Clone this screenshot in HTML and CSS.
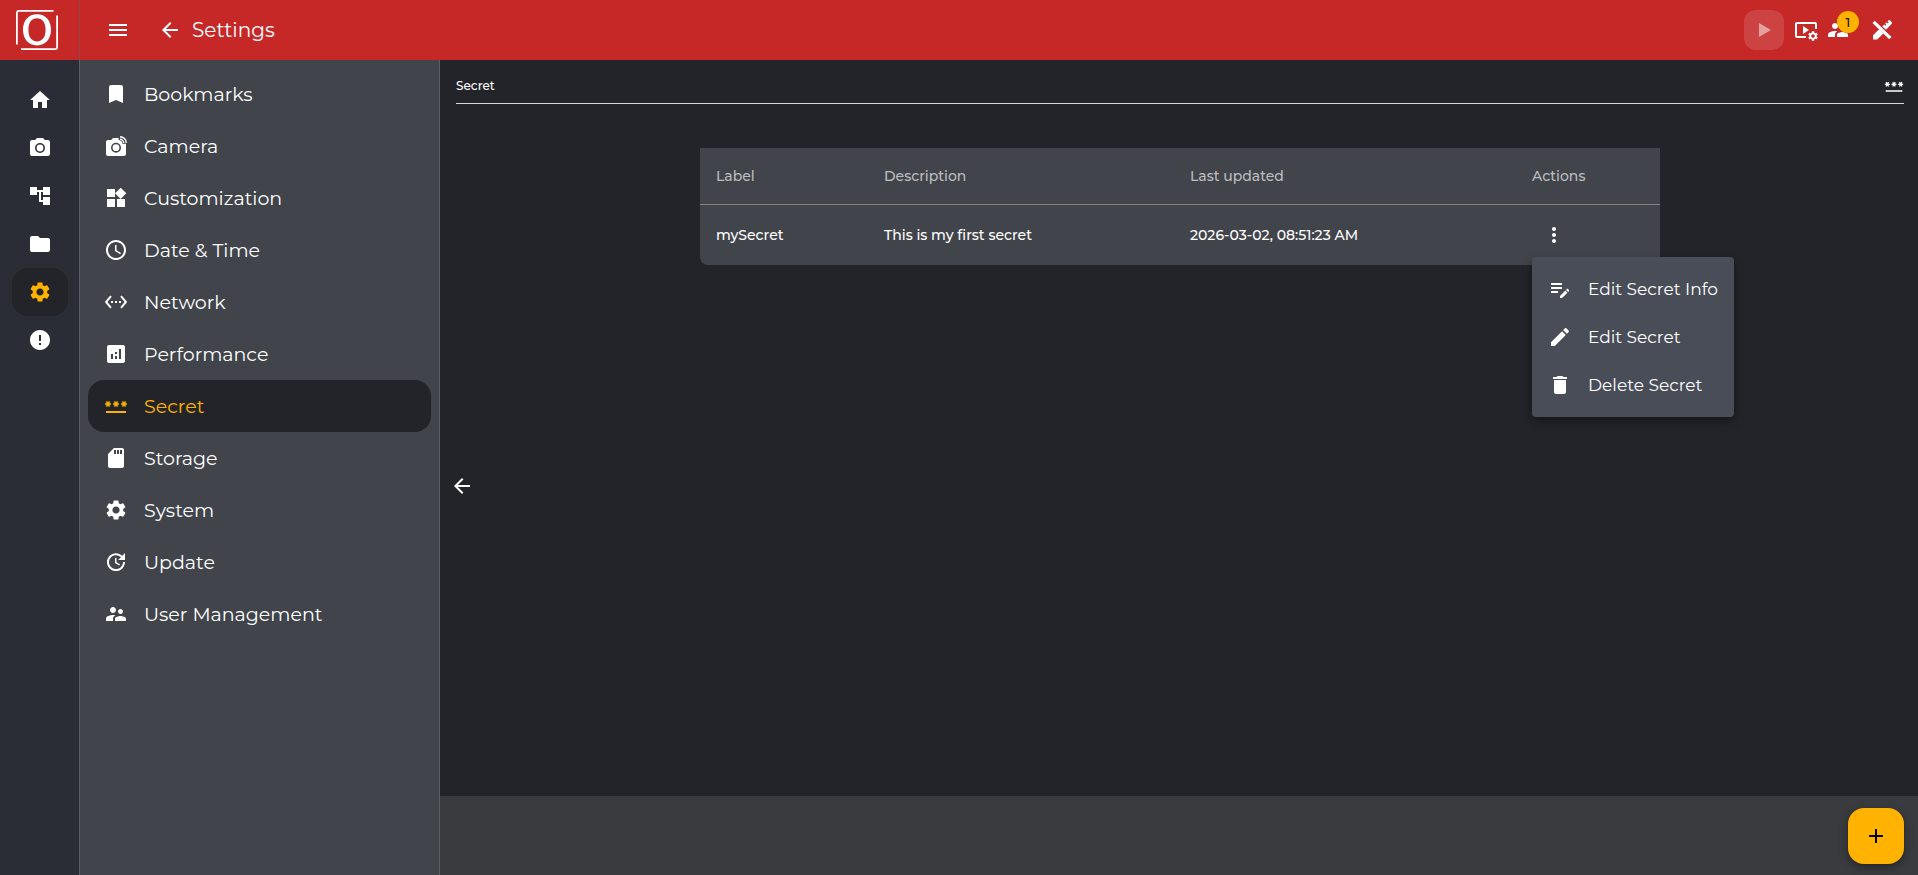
FILE: index.html
```html
<!DOCTYPE html>
<html lang="en">
<head>
<meta charset="utf-8">
<meta name="viewport" content="width=device-width, initial-scale=1">
<title>Settings - Secret</title>
<link rel="stylesheet" href="styles.css">
</head>
<body>
<svg class="sprite" aria-hidden="true">
  <symbol id="i-gear" viewBox="0 0 24 24"><path d="M19.14 12.94c.04-.3.06-.61.06-.94 0-.32-.02-.64-.07-.94l2.03-1.58c.18-.14.23-.41.12-.61l-1.92-3.32c-.12-.22-.37-.29-.59-.22l-2.39.96c-.5-.38-1.03-.7-1.62-.94l-.36-2.54c-.04-.24-.24-.41-.48-.41h-3.84c-.24 0-.43.17-.47.41l-.36 2.54c-.59.24-1.13.57-1.62.94l-2.39-.96c-.22-.08-.47 0-.59.22L2.74 8.87c-.12.21-.08.47.12.61l2.03 1.58c-.05.3-.09.63-.09.94s.02.64.07.94l-2.03 1.58c-.18.14-.23.41-.12.61l1.92 3.32c.12.22.37.29.59.22l2.39-.96c.5.38 1.03.7 1.62.94l.36 2.54c.05.24.24.41.48.41h3.84c.24 0 .44-.17.47-.41l.36-2.54c.59-.24 1.13-.56 1.62-.94l2.39.96c.22.08.47 0 .59-.22l1.92-3.32c.12-.22.07-.47-.12-.61l-2.01-1.58zM12 15.6c-1.98 0-3.6-1.62-3.6-3.6s1.62-3.6 3.6-3.6 3.6 1.62 3.6 3.6-1.62 3.6-3.6 3.6z"/></symbol>
  <symbol id="i-back" viewBox="0 0 24 24"><path d="M20 11H7.830l5.590-5.590L12 4l-8 8 8 8 1.410-1.410L7.830 13H20v-2z"/></symbol>
  <symbol id="i-password" viewBox="0 0 24 24"><path d="M2 17h20v2H2v-2zm1.15-4.05L4 11.47l.85 1.48 1.3-.75-.85-1.48H7v-1.5H5.3l.85-1.47L4.85 7 4 8.47 3.15 7l-1.3.75.85 1.47H1v1.5h1.7l-.85 1.48 1.3.75zm6.7-.75 1.3.75.85-1.48.85 1.48 1.3-.75-.85-1.48H15v-1.5h-1.7l.85-1.47-1.3-.75L12 8.47 11.15 7l-1.3.75.85 1.47H9v1.5h1.7l-.85 1.48zM23 9.22h-1.7l.85-1.47-1.3-.75L20 8.47 19.15 7l-1.3.75.85 1.47H17v1.5h1.7l-.85 1.48 1.3.75.85-1.48.85 1.48 1.3-.75-.85-1.48H23v-1.5z"/></symbol>
  <symbol id="i-group" viewBox="0 0 24 24"><path d="M16.500 12c1.380 0 2.490-1.120 2.490-2.500S17.880 7 16.500 7 14 8.120 14 9.500s1.120 2.500 2.500 2.500zM9 11c1.660 0 2.990-1.340 2.990-3S10.660 5 9 5 6 6.340 6 8s1.340 3 3 3zm7.500 3c-1.830 0-5.500.92-5.500 2.750V19h11v-2.250c0-1.830-3.670-2.750-5.500-2.750zM9 13c-2.330 0-7 1.170-7 3.500V19h7v-2.250c0-.85.33-2.340 2.370-3.470C10.500 13.100 9.660 13 9 13z"/></symbol>
</svg>

<div class="app">
  <header class="topbar">
    <a class="brand" href="#" aria-label="Start page">
      <svg class="logo" viewBox="0 0 42 40" aria-hidden="true">
        <path d="M.9 34.500V3Q.9.9 3 .9h34.500M41.100 5.500V37q0 2.100-2.100 2.100H5" fill="none" stroke="#fff" stroke-width="1.800"/>
        <path fill="#fff" fill-rule="evenodd" d="M21 4.300c8.600 0 14 6.200 14 15.500S29.600 35.400 21 35.400 7 29.100 7 19.800 12.400 4.300 21 4.300zm0 3.900c-5.400 0-8.600 4.300-8.600 11.600S15.600 31.400 21 31.400s8.600-4.300 8.600-11.600S26.400 8.200 21 8.200z"/>
      </svg>
    </a>
    <div class="topbar-main">
      <button class="icon-btn" type="button" aria-label="Toggle menu"><svg class="icon" viewBox="0 0 24 24"><path d="M3 18h18v-2H3v2zm0-5h18v-2H3v2zm0-7v2h18V6H3z"/></svg></button>
      <button class="icon-btn back" type="button" aria-label="Back"><svg class="icon"><use href="#i-back"/></svg></button>
      <h1>Settings</h1>
      <div class="tools">
        <button class="icon-btn run" type="button" aria-label="Run" disabled><svg class="icon" viewBox="0 0 24 24"><path d="M7 5v14l12-7z"/></svg></button>
        <button class="icon-btn" type="button" aria-label="Playback settings"><svg class="icon" viewBox="0 0 24 24"><path d="M12 20H3c-1.100 0-2-.9-2-2V6c0-1.100.9-2 2-2h18c1.100 0 2 .9 2 2v5h-2V6H3v12h9v2z"/><path d="M9 8v8l6-4z"/><svg x="13" y="12" width="12" height="12" viewBox="0 0 24 24" overflow="visible"><use href="#i-gear" width="24" height="24"/></svg></svg></button>
        <button class="icon-btn users" type="button" aria-label="Active users: 1"><svg class="icon"><use href="#i-group"/></svg><span class="badge">1</span></button>
        <button class="icon-btn" type="button" aria-label="Design mode off"><svg class="icon" viewBox="0 0 24 24"><path d="m2.500 5 16.700 16.300 2.300-2.300L4.800 2.700z"/><path d="M9.200 11.200 3 17.300V21.500h4.200l6.200-6.100z"/><path d="m12.300 8.500 1.900-1.900 1.200 1.200 1-1-1.200-1.200 1.300-1.300 1.200 1.200 1-1-1.200-1.200.7-.7c.6-.6 1.400-.6 2 0l1.400 1.400c.6.600.6 1.400 0 2l-5.600 5.700z"/></svg></button>
      </div>
    </div>
  </header>

  <nav class="rail" aria-label="Main">
    <a href="#" aria-label="Home"><svg class="icon" viewBox="0 0 24 24"><path d="M10 20v-6h4v6h5v-8h3L12 3 2 12h3v8z"/></svg></a>
    <a href="#" aria-label="Camera"><svg class="icon" viewBox="0 0 24 24"><path d="M9 2 7.170 4H4c-1.100 0-2 .9-2 2v12c0 1.100.9 2 2 2h16c1.100 0 2-.9 2-2V6c0-1.100-.9-2-2-2h-3.170L15 2H9z"/><circle class="lens" cx="12" cy="12" r="4.200"/></svg></a>
    <a href="#" aria-label="Flows"><svg class="icon" viewBox="0 0 24 24"><path d="M22 11V3h-7v3H9V3H2v8h7V8h2v10h4v3h7v-8h-7v3h-2V8h2v3z"/></svg></a>
    <a href="#" aria-label="Files"><svg class="icon" viewBox="0 0 24 24"><path d="M10 4H4c-1.100 0-1.990.9-1.990 2L2 18c0 1.100.9 2 2 2h16c1.100 0 2-.9 2-2V8c0-1.100-.9-2-2-2h-8l-2-2z"/></svg></a>
    <a class="active" href="#" aria-label="Settings" aria-current="page"><svg class="icon"><use href="#i-gear"/></svg></a>
    <a href="#" aria-label="Alerts"><svg class="icon" viewBox="0 0 24 24"><path d="M12 2C6.480 2 2 6.480 2 12s4.480 10 10 10 10-4.480 10-10S17.520 2 12 2zm1 15h-2v-2h2v2zm0-4h-2V7h2v6z"/></svg></a>
  </nav>

  <nav class="sidenav" aria-label="Settings">
    <a href="#"><svg class="icon" viewBox="0 0 24 24"><path d="M17 3H7c-1.100 0-1.990.9-1.990 2L5 21l7-3 7 3V5c0-1.100-.9-2-2-2z"/></svg>Bookmarks</a>
    <a href="#"><svg class="icon" viewBox="0 0 24 24"><path d="M14.600 4H9L7.200 6H4c-1.100 0-2 .9-2 2v12c0 1.100.9 2 2 2h16c1.100 0 2-.9 2-2V9.800h-3.500c0-2-1.900-3.800-3.900-3.800z"/><circle class="lens" cx="12" cy="13.700" r="4.200"/><path class="wave" d="M16 5.300a3.700 3.700 0 0 1 3.700 3.700M16 2.700A6.300 6.300 0 0 1 22.300 9"/><circle cx="16.700" cy="8" r="1"/></svg>Camera</a>
    <a href="#"><svg class="icon" viewBox="0 0 24 24"><path d="M13 13v8h8v-8h-8zM3 21h8v-8H3v8zM3 3v8h8V3H3zm13.660-1.310L11 7.340 16.660 13l5.660-5.660-5.660-5.650z"/></svg>Customization</a>
    <a href="#"><svg class="icon" viewBox="0 0 24 24"><path d="M11.990 2C6.470 2 2 6.480 2 12s4.470 10 9.990 10C17.520 22 22 17.520 22 12S17.520 2 11.990 2zM12 20c-4.420 0-8-3.580-8-8s3.580-8 8-8 8 3.580 8 8-3.580 8-8 8zm.5-13H11v6l5.250 3.150.75-1.230-4.500-2.670z"/></svg>Date &amp; Time</a>
    <a href="#"><svg class="icon" viewBox="0 0 24 24"><path d="M7.770 6.760 6.230 5.480.82 12l5.410 6.520 1.540-1.280L3.420 12l4.350-5.240zM7 13h2v-2H7v2zm10-2h-2v2h2v-2zm-6 2h2v-2h-2v2zm6.770-7.520-1.540 1.280L20.580 12l-4.350 5.240 1.540 1.280L23.180 12l-5.410-6.520z"/></svg>Network</a>
    <a href="#"><svg class="icon" viewBox="0 0 24 24"><path d="M19 3H5c-1.100 0-2 .9-2 2v14c0 1.100.9 2 2 2h14c1.100 0 2-.9 2-2V5c0-1.100-.9-2-2-2zM9 17H7v-5h2v5zm4 0h-2v-3h2v3zm0-5h-2v-2h2v2zm4 5h-2V7h2v10z"/></svg>Performance</a>
    <a class="active" href="#" aria-current="page"><svg class="icon"><use href="#i-password"/></svg>Secret</a>
    <a href="#"><svg class="icon" viewBox="0 0 24 24"><path d="M18 2h-8L4.020 8 4 20c0 1.100.9 2 2 2h12c1.100 0 2-.9 2-2V4c0-1.100-.9-2-2-2zm-6 6h-2V4h2v4zm3 0h-2V4h2v4zm3 0h-2V4h2v4z"/></svg>Storage</a>
    <a href="#"><svg class="icon"><use href="#i-gear"/></svg>System</a>
    <a href="#"><svg class="icon" viewBox="0 0 24 24"><path d="M21 10.120h-6.780l2.740-2.820c-2.730-2.700-7.150-2.800-9.880-.1-2.730 2.710-2.730 7.080 0 9.790s7.150 2.710 9.880 0C18.320 15.650 19 14.080 19 12.100h2c0 1.980-.88 4.550-2.640 6.290-3.510 3.480-9.210 3.480-12.720 0-3.500-3.470-3.530-9.110-.02-12.580s9.140-3.470 12.650 0L21 3v7.120zM12.500 8v4.250l3.500 2.080-.72 1.210L11 13V8h1.500z"/></svg>Update</a>
    <a href="#"><svg class="icon"><use href="#i-group"/></svg>User Management</a>
  </nav>

  <main class="content">
    <div class="page-head"><h2>Secret</h2><svg class="icon" aria-hidden="true"><use href="#i-password"/></svg></div>
    <div class="page-body">
      <table class="secrets">
        <colgroup><col class="c-label"><col class="c-desc"><col class="c-date"><col></colgroup>
        <thead><tr><th scope="col">Label</th><th scope="col">Description</th><th scope="col">Last updated</th><th scope="col">Actions</th></tr></thead>
        <tbody><tr>
          <td>mySecret</td><td>This is my first secret</td><td>2026-03-02, 08:51:23 AM</td>
          <td class="actions"><div class="menu-anchor">
            <button class="icon-btn more" type="button" aria-label="Actions for mySecret" aria-haspopup="menu" aria-expanded="true"><svg class="icon" viewBox="0 0 24 24"><path d="M12 8c1.100 0 2-.9 2-2s-.9-2-2-2-2 .9-2 2 .9 2 2 2zm0 2c-1.100 0-2 .9-2 2s.9 2 2 2 2-.9 2-2-.9-2-2-2zm0 6c-1.100 0-2 .9-2 2s.9 2 2 2 2-.9 2-2-.9-2-2-2z"/></svg></button>
            <div class="menu" role="menu">
              <button type="button" role="menuitem"><svg class="icon" viewBox="0 0 24 24"><path d="M3 10h11v2H3v-2zm0-2h11V6H3v2zm0 8h7v-2H3v2zm15.010-3.130.71-.71c.39-.39 1.020-.39 1.410 0l.71.710c.39.39.39 1.020 0 1.410l-.71.710-2.120-2.120zm-.71.710-5.300 5.300V21h2.120l5.300-5.300-2.120-2.120z"/></svg>Edit Secret Info</button>
              <button type="button" role="menuitem"><svg class="icon" viewBox="0 0 24 24"><path d="M3 17.250V21h3.750L17.810 9.940l-3.750-3.750L3 17.250zM20.710 7.040c.39-.39.39-1.020 0-1.410l-2.340-2.340c-.39-.39-1.020-.39-1.410 0l-1.830 1.830 3.750 3.750 1.830-1.830z"/></svg>Edit Secret</button>
              <button type="button" role="menuitem"><svg class="icon" viewBox="0 0 24 24"><path d="M6 19c0 1.100.9 2 2 2h8c1.100 0 2-.9 2-2V7H6v12zM19 4h-3.500l-1-1h-5l-1 1H5v2h14V4z"/></svg>Delete Secret</button>
            </div>
          </div></td>
        </tr></tbody>
      </table>
    </div>
    <button class="icon-btn collapse" type="button" aria-label="Collapse navigation"><svg class="icon"><use href="#i-back"/></svg></button>
    <footer class="actionbar"><button class="fab" type="button" aria-label="Add secret"><svg class="icon" viewBox="0 0 24 24"><path d="M19 13h-6v6h-2v-6H5v-2h6V5h2v6h6v2z"/></svg></button></footer>
  </main>
</div>
</body>
</html>
```
FILE: styles.css
```css
:root {
  --red: #c62828;
  --amber: #ffb300;
  --ground: #232429;
  --panel: #41444b;
  --rail: #2a2d35;
  --line: #5b5e65;
}

* { box-sizing: border-box; }

body {
  margin: 0;
  background: var(--ground);
  color: #fff;
  font-family: Montserrat, Inter, "Open Sans", sans-serif;
}

h1, h2 { margin: 0; font-weight: 400; }
a { color: inherit; text-decoration: none; }
button { font: inherit; color: inherit; background: none; border: 0; padding: 0; }

.sprite { position: absolute; width: 0; height: 0; }
.icon { display: block; flex: none; width: 24px; height: 24px; fill: currentColor; }
.lens { fill: none; stroke: var(--panel); stroke-width: 1.6; }
.rail .lens { stroke: var(--rail); }
.wave { fill: none; stroke: currentColor; stroke-width: 1.4; }

.app {
  display: grid;
  grid-template: 60px 1fr / 80px 360px minmax(0, 1fr);
  min-height: 100vh;
}

/* Top bar */
.topbar { grid-column: 1 / -1; display: flex; background: var(--red); }
.brand { display: flex; align-items: center; width: 80px; padding-left: 16px; border-right: 1px solid #8b4a4d; }
.logo { width: 42px; height: 40px; }
.topbar-main { flex: 1; display: flex; align-items: center; padding: 0 16px; }
.topbar h1 { font-size: 20px; }
.icon-btn { position: relative; display: grid; place-items: center; width: 44px; height: 44px; }
.back { margin-left: 8px; }
.tools { display: flex; align-items: center; margin-left: auto; }
.tools .icon-btn { width: 32px; height: 40px; }
.tools .run { width: 40px; margin-right: 6px; border-radius: 12px; background: rgb(255 255 255 / 13%); color: #e5a0a0; }
.tools .users { margin-right: 12px; }
.tools .icon-btn:last-child { margin-right: 4px; }
.badge {
  position: absolute;
  top: 1px;
  right: -5px;
  width: 22px;
  height: 22px;
  border-radius: 50%;
  background: var(--amber);
  color: #111;
  font-size: 13px;
  font-weight: 500;
  line-height: 22px;
  text-align: center;
}

/* Icon rail */
.rail { padding: 16px 11px 16px 12px; background: var(--rail); border-right: 1px solid var(--line); }
.rail a { display: grid; place-items: center; height: 48px; border-radius: 16px; }
.rail .active, .sidenav .active { background: var(--ground); color: var(--amber); }

/* Settings list */
.sidenav { padding: 8px; background: var(--panel); border-right: 1px solid var(--line); font-size: 19px; }
.sidenav a { display: flex; align-items: center; gap: 16px; height: 52px; padding: 0 16px; border-radius: 16px; }

/* Content */
.content { position: relative; display: flex; flex-direction: column; }
.page-head {
  display: flex;
  align-items: center;
  justify-content: space-between;
  height: 44px;
  margin: 0 14px 0 16px;
  padding-top: 8px;
  border-bottom: 1px solid #d6d7d8;
}
.page-head h2 { font-size: 12px; font-weight: 500; }
.page-head .icon { width: 20px; height: 20px; }
.page-body { flex: 1; padding: 44px 14px 44px 16px; }

.secrets {
  width: 100%;
  max-width: 960px;
  margin: 0 auto;
  table-layout: fixed;
  border-collapse: separate;
  border-spacing: 0;
  border-radius: 0 0 8px 8px;
  background: var(--panel);
  font-size: 14px;
}
.c-label { width: 168px; }
.c-desc { width: 306px; }
.c-date { width: 342px; }
.secrets th, .secrets td { padding: 0 16px; text-align: left; font-weight: 500; }
.secrets th { height: 57px; border-bottom: 1px solid #85827f; color: #bcbdbf; }
.secrets td { height: 60px; }

.menu-anchor { position: relative; }
.menu {
  position: absolute;
  z-index: 1;
  top: 100%;
  left: 0;
  width: max-content;
  min-width: 202px;
  padding: 8px 0;
  border-radius: 4px;
  background: #494d57;
  box-shadow: 0 4px 10px rgb(0 0 0 / 40%);
  font-size: 17px;
  font-weight: 400;
}
.menu button { display: flex; align-items: center; gap: 16px; width: 100%; height: 48px; padding: 0 16px; }

.collapse { position: absolute; top: 50%; left: 0; margin-top: -4px; }

.actionbar { display: flex; justify-content: flex-end; padding: 12px 14px 11px; background: #3a3b3f; }
.fab {
  display: grid;
  place-items: center;
  width: 56px;
  height: 56px;
  border-radius: 16px;
  background: var(--amber);
  color: #000;
  box-shadow: 0 3px 8px rgb(0 0 0 / 40%);
}
```
